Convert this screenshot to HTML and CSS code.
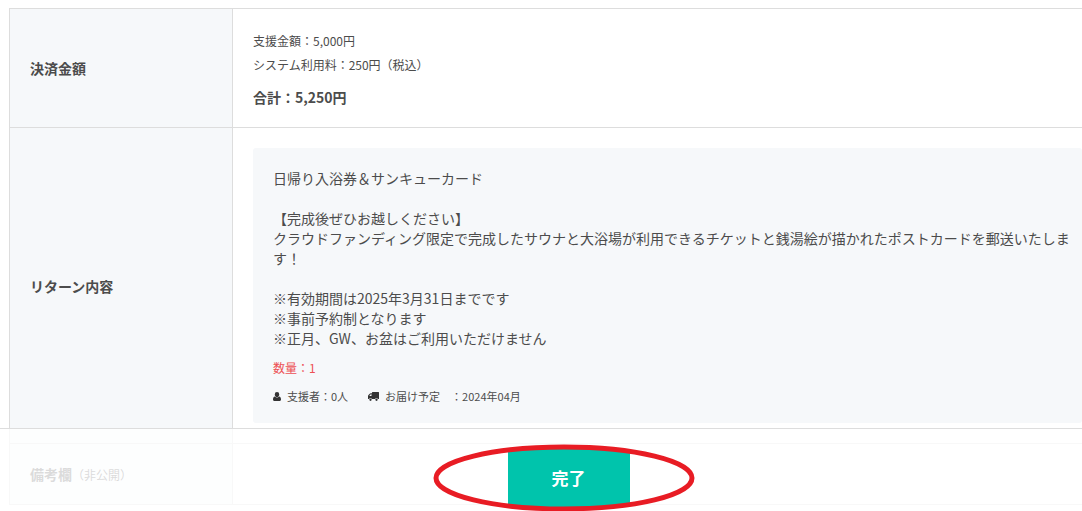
FILE: index.html
```html
<!DOCTYPE html>
<html lang="ja">
<head>
    <meta charset="UTF-8">
    <meta name="viewport" content="width=device-width, initial-scale=1.0">
    <title>支援内容の確認</title>
    <link rel="stylesheet" href="styles.css">
</head>
<body>
    <table class="confirm">
        <tr>
            <th scope="row">決済金額</th>
            <td class="amount">
                <p>支援金額：5,000円</p>
                <p>システム利用料：250円（税込）</p>
                <p class="total">合計：5,250円</p>
            </td>
        </tr>
        <tr>
            <th scope="row">リターン内容</th>
            <td>
                <div class="return-card">
                    <p>日帰り入浴券＆サンキューカード<br>
                    <br>
                    【完成後ぜひお越しください】<br>
                    クラウドファンディング限定で完成したサウナと大浴場が利用できるチケットと銭湯絵が描かれたポストカードを郵送いたします！<br>
                    <br>
                    ※有効期間は2025年3月31日までです<br>
                    ※事前予約制となります<br>
                    ※正月、GW、お盆はご利用いただけません</p>
                    <p class="quantity">数量：1</p>
                    <ul class="meta">
                        <li>
                            <svg class="icon-user" viewBox="0 0 16 18" aria-hidden="true">
                                <path d="M8 0a4.500 4.800 0 0 1 4.500 4.800C12.500 7.500 10.500 10 8 10S3.500 7.500 3.500 4.800A4.500 4.800 0 0 1 8 0zM4 9c1 1.300 2.400 2 4 2s3-.7 4-2c3 .3 4 3 4 6 0 1.800-1.200 3-3 3H3c-1.800 0-3-1.200-3-3 0-3 1-5.700 4-6z"/>
                            </svg>
                            支援者：0人
                        </li>
                        <li>
                            <svg class="icon-truck" viewBox="0 0 22 18" aria-hidden="true">
                                <path fill-rule="evenodd" d="M9 0h12a1 1 0 0 1 1 1v12a1 1 0 0 1-1 1h-1.200a3 3 0 0 0-5.600 0H7.800a3 3 0 0 0-5.600 0H1a1 1 0 0 1-1-1V8.500c0-1 .3-1.700 1-2.400L3.500 3.500c.6-.6 1.200-1 2-1H8V1a1 1 0 0 1 1-1zM2.500 8H7V4.500H5.500L2.500 8z"/>
                                <circle cx="5" cy="15.500" r="2.300"/>
                                <circle cx="17" cy="15.500" r="2.300"/>
                            </svg>
                            お届け予定　：2024年04月
                        </li>
                    </ul>
                </div>
            </td>
        </tr>
        <tr>
            <th scope="row" class="note">備考欄<span>（非公開）</span></th>
            <td></td>
        </tr>
    </table>

    <div class="action-bar">
        <div class="action">
            <button type="button" class="submit">完了</button>
            <!-- ボタンを囲む赤い丸 -->
            <svg class="mark" viewBox="0 0 262 70" aria-hidden="true">
                <ellipse cx="131" cy="35" rx="128" ry="31"/>
            </svg>
        </div>
    </div>
</body>
</html>
```
FILE: styles.css
```css
body {
    margin: 8px 0 0 9px;
    overflow: hidden;
    background-color: #fff;
    color: #4c4c4c;
    font-family: "Noto Sans CJK JP", sans-serif;
    font-size: 14px;
    line-height: 20px;
}

p {
    margin: 0;
}

.confirm {
    width: 100%;
    border-spacing: 0;
    border-top: 1px solid #ddd;
}

.confirm th {
    box-sizing: border-box;
    width: 224px;
    padding: 20px;
    border: 1px solid #ddd;
    border-top: none;
    background-color: #f6f8fa;
    text-align: left;
}

.confirm td {
    padding: 20px 0 20px 20px;
    border-bottom: 1px solid #ddd;
}

.confirm .amount {
    padding-bottom: 18px;
    font-size: 12px;
    line-height: 24px;
}

.amount .total {
    margin-top: 8px;
    font-size: 14px;
    font-weight: bold;
}

.return-card {
    padding: 20px 0 19px 20px;
    border-radius: 3px;
    background-color: #f6f8fa;
}

.quantity {
    margin: 8px 0;
    color: #ed5054;
    font-size: 12px;
    line-height: 24px;
}

.meta {
    display: flex;
    gap: 20px;
    margin: 0;
    padding: 0;
    list-style: none;
    font-size: 11px;
    line-height: 16px;
}

.meta li {
    display: flex;
    align-items: center;
    gap: 6px;
}

.meta svg {
    height: 9px;
    fill: #333;
}

.icon-user {
    width: 8px;
}

.icon-truck {
    width: 11px;
}

.confirm .note {
    height: 61px;
    padding: 0 20px;
}

.note span {
    font-size: 12px;
    font-weight: normal;
}

.action-bar {
    position: fixed;
    right: 0;
    bottom: 0;
    left: 0;
    display: flex;
    justify-content: center;
    padding: 20px 0 4px 55px;
    border-top: 1px solid #ddd;
    background-color: rgba(255, 255, 255, 0.8);
}

.action {
    position: relative;
}

.submit {
    display: block;
    padding: 17px 44px;
    border: none;
    background-color: #00c4ac;
    color: #fff;
    font-family: inherit;
    font-size: 17px;
    font-weight: bold;
    line-height: 24px;
    cursor: pointer;
}

/* ボタンより少し左に寄せて重ねる */
.mark {
    position: absolute;
    top: -6px;
    left: -75px;
    width: 262px;
    height: 70px;
    fill: none;
    stroke: #e81c24;
    stroke-width: 5px;
    pointer-events: none;
}
```
